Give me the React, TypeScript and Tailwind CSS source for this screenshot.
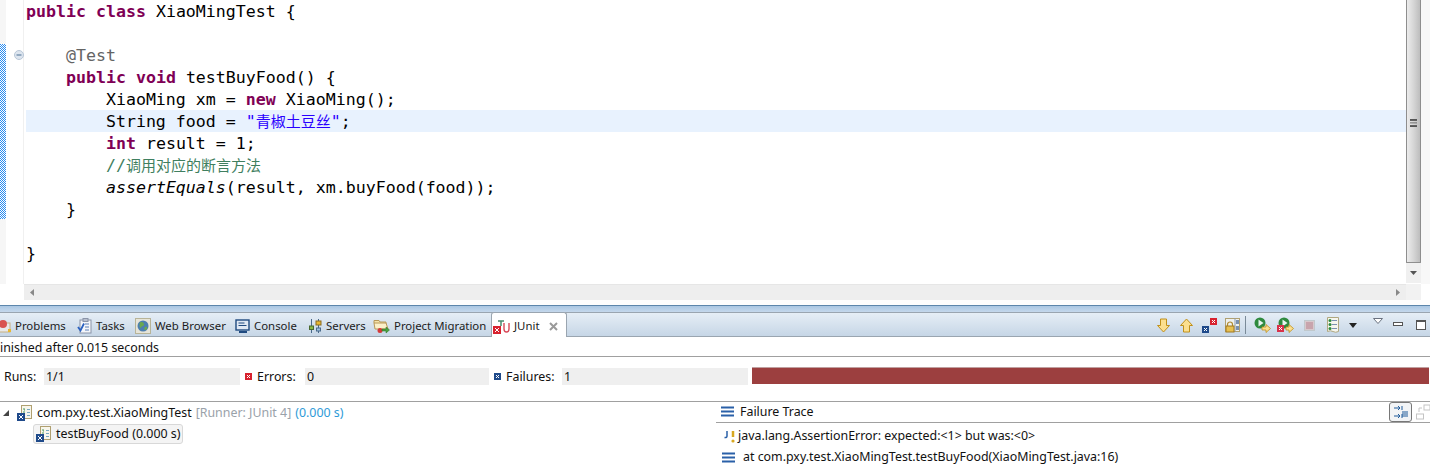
import React from "react";

const UI = "font-['Noto_Sans',sans-serif]";

const K = ({ children }: { children: React.ReactNode }) => (
  <span className="font-bold text-[#7f0055]">{children}</span>
);

const Line = ({ children, className = "h-[22px] leading-[24px]" }: { children?: React.ReactNode; className?: string }) => (
  <div className={`whitespace-pre ${className}`}>{children}</div>
);

const Sq = ({ c, x, y, s = 7 }: { c: string; x: number; y: number; s?: number }) => (
  <g>
    <rect x={x} y={y} width={s} height={s} fill={c} />
    <path d={`M${x + 2} ${y + 2}L${x + s - 2} ${y + s - 2}M${x + s - 2} ${y + 2}L${x + 2} ${y + s - 2}`} stroke="#fff" strokeWidth="1" />
  </g>
);

const Ico = ({ w = 16, h = 16, children, className = "" }: { w?: number; h?: number; children: React.ReactNode; className?: string }) => (
  <svg width={w} height={h} viewBox={`0 0 ${w} ${h}`} className={`shrink-0 ${className}`}>{children}</svg>
);

const Problems = () => (
  <Ico w={14} h={16}>
    <rect x="-4" y="5" width="14" height="9" fill="#e8e8e8" stroke="#c8b080" />
    <circle cx="3" cy="6" r="4" fill="#d9534f" />
    <rect x="8" y="11" width="3" height="3" fill="#e8b830" />
  </Ico>
);
const Tasks = () => (
  <Ico w={15} h={16}>
    <rect x="3" y="2" width="11" height="13" fill="#f4f6fa" stroke="#8a94a8" />
    <rect x="6" y="0.5" width="5" height="3" fill="#b8c0d0" stroke="#8a94a8" />
    <path d="M8 6h4M8 9h4M8 12h4" stroke="#5b7fb5" />
    <path d="M1 9l2.5 3.5L7 5.5" stroke="#2b62c0" strokeWidth="1.8" fill="none" />
  </Ico>
);
const Browser = () => (
  <Ico>
    <rect x="0.5" y="0.5" width="15" height="15" fill="#e6e4d8" stroke="#b8b498" />
    <circle cx="8" cy="8" r="5.5" fill="#4d7fb0" />
    <path d="M5 4.5c2-1 4 0 4 2s-2 1-3 3-2-3-1-5zM10 9c1-.5 2.5 0 2 1.500s-2 2-2.500 1 0-2 .5-2.500z" fill="#6aa84f" />
  </Ico>
);
const Console = () => (
  <Ico w={15} h={16}>
    <rect x="1" y="2" width="13" height="10" fill="#dfe8f4" stroke="#1f4a80" strokeWidth="1.400" />
    <path d="M3.500 5h6M3.500 7.500h8" stroke="#1f4a80" />
    <path d="M4 14h8" stroke="#1f4a80" strokeWidth="2" />
  </Ico>
);
const Servers = () => (
  <Ico w={14} h={16}>
    <path d="M3.500 1v14M10.500 1v14" stroke="#4a6a8a" />
    <rect x="1.500" y="8" width="4" height="3.500" fill="#88b848" stroke="#4a6a30" />
    <rect x="8" y="3" width="5" height="4" fill="#e8b830" stroke="#8a6a20" />
    <rect x="8.500" y="10" width="4" height="3" fill="#9ec0e0" stroke="#4a6a8a" />
  </Ico>
);
const Migration = () => (
  <Ico w={17} h={16}>
    <path d="M1 5V2.500h5l1 1.500h6v2" fill="#f5e3a8" stroke="#b89858" />
    <path d="M1 5h12l2 6H2z" fill="#fbf0c8" stroke="#b89858" />
    <circle cx="7" cy="12.500" r="2.500" fill="#d43a3a" />
    <path d="M9 11h4V9l3.500 3-3.500 3v-2H9z" fill="#4aa040" stroke="#2a7020" strokeWidth=".5" />
  </Ico>
);
const JUnitIcon = () => (
  <Ico w={17} h={16}>
    <Sq c="#d8222f" x={0} y={8} s={8} />
    <path d="M5 3h6M8 3v5" stroke="#4a8a70" strokeWidth="1.500" />
    <path d="M11 5v6q0 3 2.500 3t2.500-3V5" stroke="#d84a5a" strokeWidth="1.400" fill="none" />
  </Ico>
);
const Arrow = ({ up }: { up?: boolean }) => (
  <Ico w={13} h={15}>
    <path
      d={up ? "M6.500 1L12.500 7.500H9.500V14H3.500V7.500H.5z" : "M6.500 14L12.500 7.500H9.500V1H3.500V7.500H.5z"}
      fill="#fbdf8e"
      stroke="#c0901a"
    />
  </Ico>
);
const Mono = ({ w }: { w: string }) => (
  <span className={`inline-block ${w}`} />
);
const TreeClass = () => (
  <Ico w={15} h={16}>
    <rect x="4.500" y="0.500" width="10" height="13" fill="#f8f6ec" stroke="#b0a070" />
    <path d="M7 3v2h1M7 6v3h1" stroke="#4a9a60" fill="none" />
    <path d="M10 4.500h3M10 7.500h3M10 10.500h3" stroke="#78a8c0" />
    <Sq c="#1f4a8a" x={0} y={8} s={8} />
  </Ico>
);
const Lines = ({ w = 13 }: { w?: number }) => (
  <Ico w={w} h={11}>
    <path d={`M0 1.500H${w}M0 5.500H${w}M0 9.500H${w}`} stroke="#2a60a8" strokeWidth="2" />
  </Ico>
);

const Tab = ({ w, icon, label, gap = "gap-[4px]" }: { w: string; icon: React.ReactNode; label: string; gap?: string }) => (
  <div className={`flex items-center ${gap} ${w} shrink-0 text-[11.4px] text-[#1c1c1c]`}>
    {icon}
    <span className="whitespace-nowrap">{label}</span>
  </div>
);

export default function App() {
  return (
    <div className={`flex h-[468px] w-[1430px] flex-col overflow-hidden bg-white text-[12.4px] leading-none text-[#111] ${UI}`}>
      {/* editor */}
      <div className="flex h-[284px] shrink-0">
        <div className="flex w-[6px] shrink-0 flex-col bg-[#f6f6f6]">
          <svg width="6" height="175" className="mt-[44px] block" shapeRendering="crispEdges">
            <defs>
              <pattern id="dither" width="2" height="2" patternUnits="userSpaceOnUse">
                <rect width="2" height="2" fill="#ffffff" />
                <rect width="1" height="1" fill="#2a8cf0" />
                <rect x="1" y="1" width="1" height="1" fill="#2a8cf0" />
              </pattern>
            </defs>
            <rect width="6" height="175" fill="url(#dither)" />
          </svg>
        </div>
        <div className="relative w-[18px] shrink-0 border-r border-[#f0f0f0]">
          <svg width="10" height="10" viewBox="0 0 10 10" className="absolute left-[8px] top-[50px]">
            <circle cx="5" cy="5" r="4.500" fill="#dde5ef" stroke="#b8c6d6" />
            <path d="M2.500 5h5" stroke="#6a88a8" strokeWidth="1.300" />
          </svg>
        </div>
        <div className="min-w-0 flex-1 pt-[1px] font-['DejaVu_Sans_Mono',monospace] text-[16.6px] text-black">
          <div className="pl-[2px]">
            <Line className="h-[22px] leading-[22px]"><K>public</K> <K>class</K> XiaoMingTest {"{"}</Line>
            <Line />
            <Line className="h-[21px] leading-[22px]">    <span className="text-[#646464]">@Test</span></Line>
            <Line>    <K>public</K> <K>void</K> testBuyFood() {"{"}</Line>
            <Line>        XiaoMing xm = <K>new</K> XiaoMing();</Line>
            <Line className="h-[22px] bg-[#e8f2fe] leading-[22px]">        String food = <span className="text-[#2a00ff]">"<span className="font-['Noto_Sans_CJK_SC',sans-serif] text-[15px]">青椒土豆丝</span>"</span>;</Line>
            <Line>        <K>int</K> result = 1;</Line>
            <Line className="h-[22px] leading-[21px]">        <span className="text-[#3f7f5f]">//<span className="font-['Noto_Sans_CJK_SC',sans-serif] text-[15px]">调用对应的断言方法</span></span></Line>
            <Line>        <span className="italic">assertEquals</span>(result, xm.buyFood(food));</Line>
            <Line>    {"}"}</Line>
            <Line />
            <Line>{"}"}</Line>
          </div>
        </div>
        {/* vertical scrollbar */}
        <div className="flex w-[24px] shrink-0">
          <div className="flex w-[15px] flex-col">
            <div className="flex h-[263px] items-start justify-center rounded-b-[1px] border border-t-0 border-[#8e8e8e] bg-gradient-to-r from-[#ececec] via-[#d6d6d6] to-[#bdbdbd] pt-[119px]">
              <div className="h-[8px] w-[7px] border-y border-[#555] bg-[linear-gradient(#555_1px,transparent_1px)] bg-[length:100%_2.500px]" />
            </div>
            <div className="flex h-[20px] items-center justify-center bg-[#f0f0f0]">
              <svg width="7" height="4" viewBox="0 0 7 4"><path d="M0 0h7L3.500 4z" fill="#555" /></svg>
            </div>
          </div>
          <div className="w-[9px] bg-[#f8f8f8]" />
        </div>
      </div>
      {/* horizontal scrollbar */}
      <div className="flex h-[16px] shrink-0">
        <div className="w-[24px] shrink-0" />
        <div className="flex w-[1382px] items-center justify-between border-t border-[#e6e6e6] bg-[#eeeeee] pl-[6px] pr-[6px]">
          <svg width="4" height="7" viewBox="0 0 4 7"><path d="M4 0v7L0 3.500z" fill="#888" /></svg>
          <svg width="4" height="7" viewBox="0 0 4 7"><path d="M0 0v7l4-3.500z" fill="#888" /></svg>
        </div>
        <div className="w-[15px] bg-[#f2f2f2]" />
      </div>
      <div className="h-[5px] shrink-0 bg-[#fdfdfd]" />
      {/* tab bar */}
      <div className="h-[7px] shrink-0 border-t border-[#5b85ab] bg-gradient-to-b from-[#a9c6e2] to-[#c5d8ec]" />
      <div className="flex h-[25px] shrink-0 items-stretch border-y border-[#9aa5b0] bg-gradient-to-b from-[#e6eef6] to-[#c6d6e6]">
        <div className="flex items-center pt-[2px]">
          <Tab w="w-[77px]" icon={<Problems />} label="Problems" gap="gap-[1px]" />
          <Tab w="w-[58px]" icon={<Tasks />} label="Tasks" />
          <Tab w="w-[100px]" icon={<Browser />} label="Web Browser" />
          <Tab w="w-[73px]" icon={<Console />} label="Console" />
          <Tab w="w-[65px]" icon={<Servers />} label="Servers" />
          <Tab w="w-[118px]" icon={<Migration />} label="Project Migration" />
        </div>
        <div className="-mt-[1px] -mb-[1px] flex w-[76px] shrink-0 items-center rounded-t-[3px] border border-b-0 border-[#9aa5b0] bg-white pl-[1px] pt-[2px] text-[11.4px]">
          <JUnitIcon />
          <span className="ml-[4px] whitespace-nowrap text-[#1c1c1c]">JUnit</span>
          <svg width="9" height="9" viewBox="0 0 9 9" className="ml-[9px]">
            <path d="M1 1l7 7M8 1l-7 7" stroke="#9a9a9a" strokeWidth="2" />
          </svg>
        </div>
        <div className="flex flex-1 items-center justify-end pt-[1px]">
          <Arrow />
          <Mono w="w-[10px]" />
          <Arrow up />
          <Mono w="w-[9px]" />
          <Ico w={15} h={15}>
            <Sq c="#1f4a8a" x={0} y={8} />
            <Sq c="#d8222f" x={8} y={0} />
          </Ico>
          <Mono w="w-[8px]" />
          <Ico w={15} h={16}>
            <rect x="0.500" y="1.500" width="14" height="13" fill="#eef0ee" stroke="#b0a070" />
            <path d="M10 1.500v13" stroke="#8a98b0" />
            <rect x="11" y="3" width="3" height="4" fill="#7a90b0" />
            <rect x="11" y="9" width="3" height="4" fill="#7a90b0" />
            <path d="M2.500 9V7.500a2.500 2.500 0 0 1 5 0V9" fill="none" stroke="#b08a30" strokeWidth="1.200" />
            <rect x="1" y="9" width="8" height="6" fill="#e8c050" stroke="#a07820" />
          </Ico>
          <div className="mx-[5px] h-[18px] w-[1px] bg-[#7a8a98]" />
          <Mono w="w-[3px]" />
          <Ico w={17} h={16}>
            <circle cx="6" cy="6" r="5.500" fill="#2e8a3e" />
            <path d="M4.500 2.500v7l5-3.500z" fill="#e8f4f0" />
            <path d="M8 10h4V7.500l4.500 4-4.500 4V13H8z" fill="#fbdf8e" stroke="#c0901a" strokeWidth=".8" />
          </Ico>
          <Mono w="w-[6px]" />
          <Ico w={17} h={16}>
            <circle cx="7" cy="6" r="5.500" fill="#2e8a3e" />
            <path d="M5.500 2.500v7l5-3.500z" fill="#e8f4f0" />
            <Sq c="#d8324a" x={0} y={8} />
            <path d="M9 10h3V7.500l4.500 4-4.500 4V13H9z" fill="#fbdf8e" stroke="#c0901a" strokeWidth=".8" />
          </Ico>
          <Mono w="w-[10px]" />
          <Ico w={11} h={11}>
            <rect x="0.500" y="0.500" width="10" height="10" fill="#d8c8cc" stroke="#c0c8cc" />
            <rect x="2" y="2" width="7" height="7" fill="#c8a4ac" />
          </Ico>
          <Mono w="w-[12px]" />
          <Ico w={12} h={16}>
            <path d="M.5.500h11v14q-3 1.500-5.500 0t-5.500 0z" fill="#f6f6ee" stroke="#b0a880" />
            <path d="M5 3.500h5M5 7.500h5M5 11.500h5" stroke="#7a90b0" />
            <circle cx="3" cy="3.500" r="1.500" fill="#2e8a3e" />
            <circle cx="3" cy="7.500" r="1.500" fill="#2e8a3e" />
            <circle cx="3" cy="11.500" r="1.500" fill="#2e8a3e" />
          </Ico>
          <Mono w="w-[10px]" />
          <svg width="8" height="5" viewBox="0 0 8 5" className="shrink-0"><path d="M0 0h8L4 5z" fill="#222" /></svg>
          <Mono w="w-[16px]" />
          <svg width="10" height="6" viewBox="0 0 10 6" className="mb-[8px] shrink-0"><path d="M.5.500h9L5 5.500z" fill="#fff" stroke="#6a7280" /></svg>
          <Mono w="w-[10px]" />
          <div className="mb-[3px] h-[4px] w-[10px] shrink-0 border border-[#555] bg-white" />
          <Mono w="w-[13px]" />
          <div className="h-[10px] w-[10px] shrink-0 border border-[#555] border-t-2 bg-white" />
          <Mono w="w-[4px]" />
        </div>
      </div>
      {/* status */}
      <div className="flex h-[20px] shrink-0 items-center border-b border-[#a0a0a0] pt-[3px]">
        <span className="whitespace-nowrap">inished after 0.015 seconds</span>
      </div>
      {/* counters */}
      <div className="flex h-[45px] shrink-0 items-start border-b border-[#a0a0a0] pt-[11px]">
        <span className="ml-[4px] w-[40px] leading-[17px]">Runs:</span>
        <div className="h-[17px] w-[196px] bg-[#efefef] pl-[2px] leading-[17px]">1/1</div>
        <Ico w={7} h={17} className="ml-[5px]"><Sq c="#d8222f" x={0} y={5} /></Ico>
        <span className="ml-[5px] w-[48px] leading-[17px]">Errors:</span>
        <div className="h-[17px] w-[184px] bg-[#efefef] pl-[2px] leading-[17px]">0</div>
        <Ico w={7} h={17} className="ml-[5px]"><Sq c="#1f4a8a" x={0} y={5} /></Ico>
        <span className="ml-[5px] w-[56px] leading-[17px]">Failures:</span>
        <div className="h-[17px] w-[186px] bg-[#efefef] pl-[2px] leading-[17px]">1</div>
        <div className="-mt-[1px] ml-[4px] h-[17px] w-[677px] border-t border-[#c0a0a0] bg-[#9c3f3f]" />
      </div>
      {/* bottom */}
      <div className="flex min-h-0 flex-1">
        <div className="w-[715px] shrink-0 pl-[3px] pt-[2px]">
          <div className="flex h-[18px] items-center">
            <svg width="6" height="6" viewBox="0 0 6 6" className="mr-[8px] shrink-0"><path d="M6 0v6H0z" fill="#444" /></svg>
            <TreeClass />
            <span className="ml-[5px] whitespace-nowrap">com.pxy.test.XiaoMingTest</span>
            <span className="ml-[4px] whitespace-nowrap text-[#9aa2aa]">[Runner: JUnit 4]</span>
            <span className="ml-[4px] whitespace-nowrap text-[#2f9bd8]">(0.000 s)</span>
          </div>
          <div className="ml-[30px] mt-[2px] flex h-[20px] w-[150px] items-center rounded-[3px] border border-[#d8d8d8] bg-[#f4f4f4] pl-[2px]">
            <TreeClass />
            <span className="ml-[5px] whitespace-nowrap">testBuyFood (0.000 s)</span>
          </div>
        </div>
        <div className="flex min-w-0 flex-1 flex-col">
          <div className="-mt-[1px] ml-[1px] flex h-[22px] items-center border-b border-[#a0a0a0] pl-[5px]">
            <Lines />
            <span className="ml-[6px] pt-[2px]">Failure Trace</span>
            <div className="ml-auto flex items-center">
              <div className="flex h-[20px] w-[23px] items-center justify-center rounded-[3px] border border-[#777] bg-[#f2f4f6]">
                <Ico w={16} h={14}>
                  <path d="M1 3h6M5 1l2 2-2 2M9 1v4M1 11h6M5 9l2 2-2 2M9 9v4" stroke="#1e5a9a" fill="none" />
                  <path d="M9 7h6M9 9h6M9 11h6" stroke="#1e5a9a" />
                </Ico>
              </div>
              <Ico w={14} h={16} className="ml-[4px]">
                <rect x="8" y="1" width="6" height="5" fill="#fff" stroke="#c4c4c4" />
                <rect x="0.500" y="10" width="7" height="5" fill="#fff" stroke="#c4c4c4" />
                <path d="M3 8V4h3" stroke="#c4c4c4" fill="none" />
              </Ico>
            </div>
          </div>
          <div className="mt-[3px] flex h-[21px] items-center pl-[8px]">
            <Ico w={15} h={14}>
              <path d="M4 1v5q0 2-2.500 1.500" stroke="#2a60a8" strokeWidth="1.500" fill="none" />
              <path d="M10 1v6" stroke="#d8a820" strokeWidth="2.500" />
              <circle cx="10" cy="11" r="1.600" fill="#d8a820" />
            </Ico>
            <span className="whitespace-nowrap">java.lang.AssertionError: expected:&lt;1&gt; but was:&lt;0&gt;</span>
          </div>
          <div className="flex h-[20px] items-center pl-[7px]">
            <Lines />
            <span className="ml-[8px] whitespace-nowrap">at com.pxy.test.XiaoMingTest.testBuyFood(XiaoMingTest.java:16)</span>
          </div>
        </div>
      </div>
    </div>
  );
}
